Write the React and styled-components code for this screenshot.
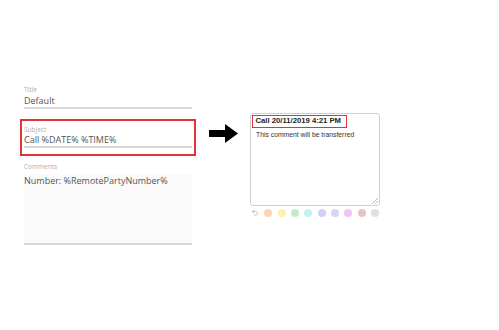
import styled, { createGlobalStyle } from "styled-components"
import { Undo2 } from "lucide-react"

const GlobalStyle = createGlobalStyle`
    html, body {
        margin: 0;
        padding: 0;
        background: #fff;
    }
    body {
        font-family: "Open Sans", "Liberation Sans", sans-serif;
    }
`

const Page = styled.div`
    width: 499px;
    height: 330px;
    display: flex;
    align-items: flex-start;
    padding-top: 86px;
    box-sizing: border-box;
`

const Form = styled.div`
    margin-left: 20px;
    width: 176px;
    display: flex;
    flex-direction: column;
`

const Field = styled.div`
    padding: ${p => p.$boxed ? "5px 2px 6px" : "0 4px"};
    border: ${p => p.$boxed ? "2px solid #e2323c" : "none"};
    margin-top: ${p => p.$top || 0}px;
`

const Label = styled.div`
    font-size: 6.5px;
    line-height: 8px;
    color: #adadad;
`

const Value = styled.div`
    font-size: 9px;
    line-height: 12px;
    color: #555;
    border-bottom: 2px solid #dadada;
    margin-top: ${p => p.$gap || 0}px;
`

const Area = styled.div`
    margin-top: 3px;
    height: 71px;
    padding: 1px 0 0;
    box-sizing: border-box;
    background: #fafafa;
    border-bottom: 2px solid #d6d6d6;
    font-size: 9px;
    line-height: 12px;
    color: #555;
`

const ArrowBox = styled.div`
    margin: 38px 0 0 13px;
    width: 29px;
    height: 19px;
    display: flex;
`

const Preview = styled.div`
    margin: 27px 0 0 12px;
    display: flex;
    flex-direction: column;
`

const Note = styled.div`
    position: relative;
    width: 130px;
    height: 93px;
    box-sizing: border-box;
    border: 1px solid #cfcfcf;
    border-radius: 3px;
    font-family: "Liberation Sans", Arial, sans-serif;
    color: #333;
`

const NoteTitle = styled.div`
    margin: 0.5px 0 0 0.5px;
    width: 95px;
    height: 13px;
    box-sizing: border-box;
    border: 1.5px solid #e2323c;
    padding-left: 3px;
    font-size: 7.7px;
    font-weight: bold;
    line-height: 10px;
    color: #222;
    white-space: nowrap;
`

const NoteBody = styled.div`
    margin: 3px 0 0 5px;
    font-size: 6.8px;
    line-height: 8px;
    white-space: nowrap;
`

const Grip = styled.svg`
    position: absolute;
    right: 1px;
    bottom: 1px;
`

const Swatches = styled.div`
    margin: 2.5px 0 0 1px;
    display: flex;
    gap: 5.33px;
    align-items: center;
`

const Dot = styled.div`
    width: 8px;
    height: 8px;
    border-radius: 50%;
    background: ${p => p.$c};
`

const UndoIcon = styled.div`
    width: 8px;
    height: 8px;
    display: flex;
    align-items: center;
    justify-content: center;
    color: #f4a3aa;
`

const colors = ["#fdd5b2", "#fff0b0", "#c6eac7", "#c3f0f0", "#d0d0f8", "#d5d5f6", "#f5c3f3", "#e2c5c5", "#e0e0e0"]

const App = () => {
    return (
        <Page>
            <GlobalStyle />
            <Form>
                <Field>
                    <Label>Title</Label>
                    <Value $gap={1}>Default</Value>
                </Field>
                <Field $boxed $top={10}>
                    <Label>Subject</Label>
                    <Value>Call %DATE% %TIME%</Value>
                </Field>
                <Field $top={7}>
                    <Label>Comments</Label>
                    <Area>Number: %RemotePartyNumber%</Area>
                </Field>
            </Form>

            <ArrowBox>
                <svg width="29" height="19" viewBox="0 0 29 19">
                    <polygon points="0,6 16,6 16,0 29,9.5 16,19 16,13 0,13" fill="#000" />
                </svg>
            </ArrowBox>

            <Preview>
                <Note>
                    <NoteTitle>Call 20/11/2019 4:21 PM</NoteTitle>
                    <NoteBody>This comment will be transferred</NoteBody>
                    <Grip width="6" height="6" viewBox="0 0 6 6">
                        <line x1="6" y1="0" x2="0" y2="6" stroke="#aaa" strokeWidth="0.8" />
                        <line x1="6" y1="3" x2="3" y2="6" stroke="#aaa" strokeWidth="0.8" />
                    </Grip>
                </Note>
                <Swatches>
                    <UndoIcon><Undo2 size={9} strokeWidth={2.5} /></UndoIcon>
                    {colors.map(c => <Dot key={c} $c={c} />)}
                </Swatches>
            </Preview>
        </Page>
    )
}

export default App
